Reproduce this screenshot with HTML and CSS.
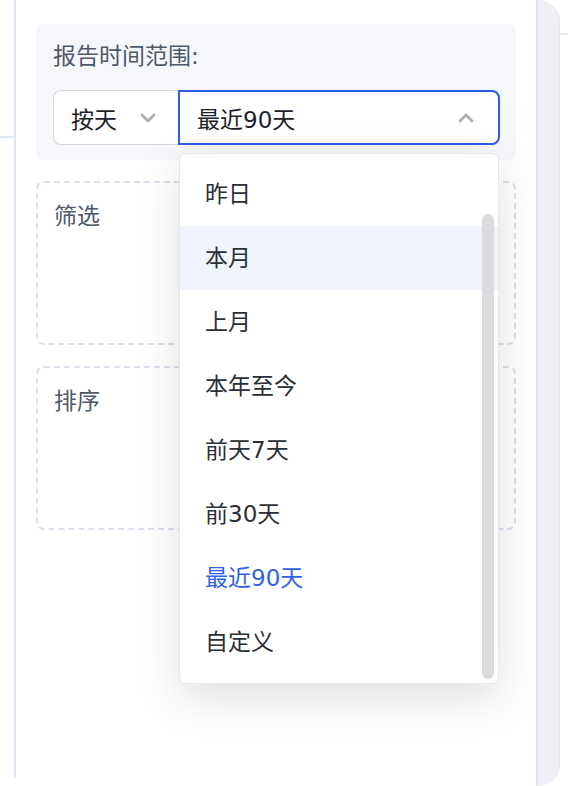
FILE: index.html
```html
<!DOCTYPE html>
<html lang="zh-CN">
<head>
    <meta charset="UTF-8">
    <title>报告时间范围</title>
    <link rel="stylesheet" href="styles.css">
</head>
<body>
<div class="app">
    <div class="side-left">
        <div class="side-top"></div>
    </div>

    <div class="main">
        <!-- time range card -->
        <div class="range-card">
            <p class="range-label">报告时间范围:</p>
            <div class="range-row">
                <div class="select unit-select">
                    <span>按天</span>
                    <svg class="chevron" width="16" height="10" viewBox="0 0 16 10">
                        <polyline points="2,2 8,8 14,2"></polyline>
                    </svg>
                </div>
                <div class="select period-select">
                    <span>最近90天</span>
                    <svg class="chevron" width="16" height="10" viewBox="0 0 16 10">
                        <polyline points="2,8 8,2 14,8"></polyline>
                    </svg>
                </div>
            </div>
        </div>

        <div class="drop-box">
            <p>筛选</p>
        </div>
        <div class="drop-box">
            <p>排序</p>
        </div>

        <!-- open dropdown -->
        <div class="dropdown">
            <ul>
                <li>昨日</li>
                <li class="hover">本月</li>
                <li>上月</li>
                <li>本年至今</li>
                <li>前天7天</li>
                <li>前30天</li>
                <li class="active">最近90天</li>
                <li>自定义</li>
            </ul>
            <div class="scrollbar"></div>
        </div>
    </div>

    <div class="side-right"></div>
    <div class="side-edge">
        <div class="edge-top"></div>
    </div>
</div>
</body>
</html>
```

FILE: styles.css
```css
/* Reset */
* {
    box-sizing: border-box;
    margin: 0;
    padding: 0;
}

body {
    font-family: "DejaVu Sans", "Noto Sans CJK SC", sans-serif;
    background-color: #fff;
    color: #1d2129;
    width: 568px;
    height: 786px;
    overflow: hidden;
}

.app {
    display: flex;
    height: 786px;
}

/* Left rail */
.side-left {
    width: 16px;
    height: 778px;
    border-right: 2px solid #e0e6f1;
}

.side-top {
    height: 138px;
    border-bottom: 2px solid #e0e6f1;
}

/* Main column */
.main {
    position: relative;
    width: 520px;
    padding: 24px 20px 0 20px;
}

.range-card {
    background-color: #f6f7fb;
    border-radius: 8px;
    padding: 14px 16px 15px 17px;
}

.range-label {
    font-size: 23px;
    line-height: 36px;
    color: #4e5969;
    margin-bottom: 16px;
}

.range-row {
    display: flex;
}

.select {
    display: flex;
    align-items: center;
    justify-content: space-between;
    height: 55px;
    background-color: #fff;
    font-size: 23px;
    color: #1d2129;
}

.unit-select {
    width: 125px;
    border: 1px solid #d5d7dd;
    border-right: none;
    border-radius: 8px 0 0 8px;
    padding: 0 22px 0 17px;
}

.period-select {
    flex: 1;
    border: 2px solid #2b5ee8;
    border-radius: 0 8px 8px 0;
    padding: 0 24px 0 17px;
}

.chevron polyline {
    fill: none;
    stroke: #a9adb6;
    stroke-width: 2.8;
    stroke-linecap: round;
    stroke-linejoin: round;
}

/* Dashed drop areas */
.drop-box {
    height: 164px;
    margin-top: 21px;
    border: 2px dashed #dbe0ed;
    border-radius: 8px;
    padding: 17px 16px;
}

.drop-box p {
    font-size: 23px;
    line-height: 32px;
    color: #4e5969;
}

/* Dropdown menu */
.dropdown {
    position: absolute;
    top: 153px;
    left: 163px;
    width: 320px;
    height: 531px;
    background-color: #fff;
    border: 1px solid #e6e7eb;
    border-radius: 7px;
    box-shadow: 0 14px 44px rgba(0, 0, 0, 0.13);
    padding-top: 8px;
    overflow: hidden;
}

.dropdown ul {
    list-style: none;
}

.dropdown li {
    height: 64px;
    line-height: 64px;
    padding-left: 25px;
    font-size: 23px;
    color: #2b2f36;
}

.dropdown li.hover {
    background-color: #f0f4fd;
}

.dropdown li.active {
    color: #2f62e6;
}

.scrollbar {
    position: absolute;
    top: 60px;
    right: 4px;
    width: 12px;
    height: 465px;
    border-radius: 6px;
    background-color: #dcdcdf;
}

/* Right rail */
.side-right {
    width: 24px;
    background-color: #eff0f5;
    border-left: 2px solid #e0e6f1;
    border-right: 1px solid #e4e6ee;
    border-radius: 0 22px 22px 0;
}

.side-edge {
    flex: 1;
}

.edge-top {
    height: 35px;
    border-bottom: 2px solid #e6e8ee;
}
```
